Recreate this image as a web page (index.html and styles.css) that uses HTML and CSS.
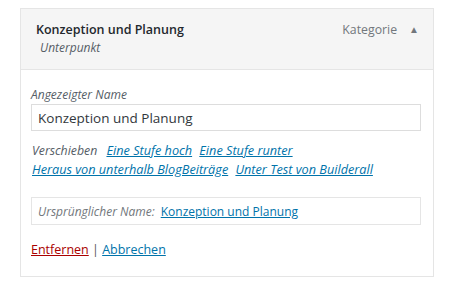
FILE: index.html
```html
<!DOCTYPE html>
<html lang="de">
<head>
  <meta charset="UTF-8">
  <title>Menüeintrag</title>
  <link rel="stylesheet" href="styles.css">
</head>
<body>
  <div class="menu-item">
    <div class="item-bar">
      <div class="item-title">
        <span class="title-text">Konzeption und Planung</span>
        <span class="sub-text">Unterpunkt</span>
      </div>
      <div class="item-controls">
        <span class="item-type">Kategorie</span>
        <span class="toggle">&#9650;</span>
      </div>
    </div>
    <div class="item-settings">
      <label class="field-label" for="title">Angezeigter Name</label>
      <input id="title" class="field-input" type="text" value="Konzeption und Planung">

      <div class="move">
        <span class="move-label">Verschieben</span>
        <a href="#">Eine Stufe hoch</a>
        <a href="#">Eine Stufe runter</a>
        <br>
        <a href="#" class="first">Heraus von unterhalb BlogBeiträge</a>
        <a href="#">Unter Test von Builderall</a>
      </div>

      <div class="original">
        <span class="orig-label">Ursprünglicher Name:</span>
        <a href="#">Konzeption und Planung</a>
      </div>

      <div class="actions">
        <a href="#" class="delete">Entfernen</a> | <a href="#">Abbrechen</a>
      </div>
    </div>
  </div>
  <div class="menu-item next"></div>
</body>
</html>
```

FILE: styles.css
```css
html, body { overflow: hidden; }
body { margin: 0; background: #fff; font-family: "Open Sans", "Noto Sans", sans-serif; font-size: 13px; color: #23282d; }
a { color: #0073aa; }
.menu-item { margin: 8px 0 0 20px; width: 412px; border: 1px solid #e5e5e5; }
.menu-item.next { margin-top: 9px; height: 0; border-width: 1px 0 0 0; width: 414px; }
.item-bar { height: 60px; background: #f5f5f5; border-bottom: 1px solid #e5e5e5; display: flex; justify-content: space-between; }
.item-title { padding: 12px 0 0 15px; display: flex; flex-direction: column; }
.title-text { font-weight: 600; font-size: 12.5px; line-height: 18px; }
.sub-text { font-style: italic; color: #555d66; font-size: 12px; line-height: 18px; margin-left: 4px; }
.item-controls { padding: 12px 14px 0 0; display: flex; gap: 12px; color: #72777c; font-size: 12.3px; line-height: 18px; }
.toggle { font-size: 10px; color: #72777c; line-height: 16px; }
.item-settings { padding: 16px 0 17px 10px; }
.field-label { display: block; font-style: italic; color: #555d66; font-size: 12px; line-height: 18px; }
.field-input { display: block; width: 390px; height: 27px; box-sizing: border-box; margin: 0; padding: 0 6px; border: 1px solid #ddd; font-family: inherit; font-size: 13.5px; color: #32373c; }
.move { margin-top: 10px; font-size: 12.3px; line-height: 19px; font-style: italic; padding-left: 1px; }
.move-label { color: #555d66; margin-right: 2px; }
.move a { margin-left: 4px; font-size: 12.7px; }
.move a.first { margin-left: 0; }
.original { margin-top: 18px; width: 390px; height: 28px; box-sizing: border-box; border: 1px solid #e5e5e5; padding: 0 6px; display: flex; align-items: center; gap: 6px; font-size: 12px; }
.orig-label { font-style: italic; color: #72777c; }
.actions { margin-top: 16px; font-size: 12.5px; line-height: 18px; color: #555; }
.actions a.delete { color: #a00; }
```
